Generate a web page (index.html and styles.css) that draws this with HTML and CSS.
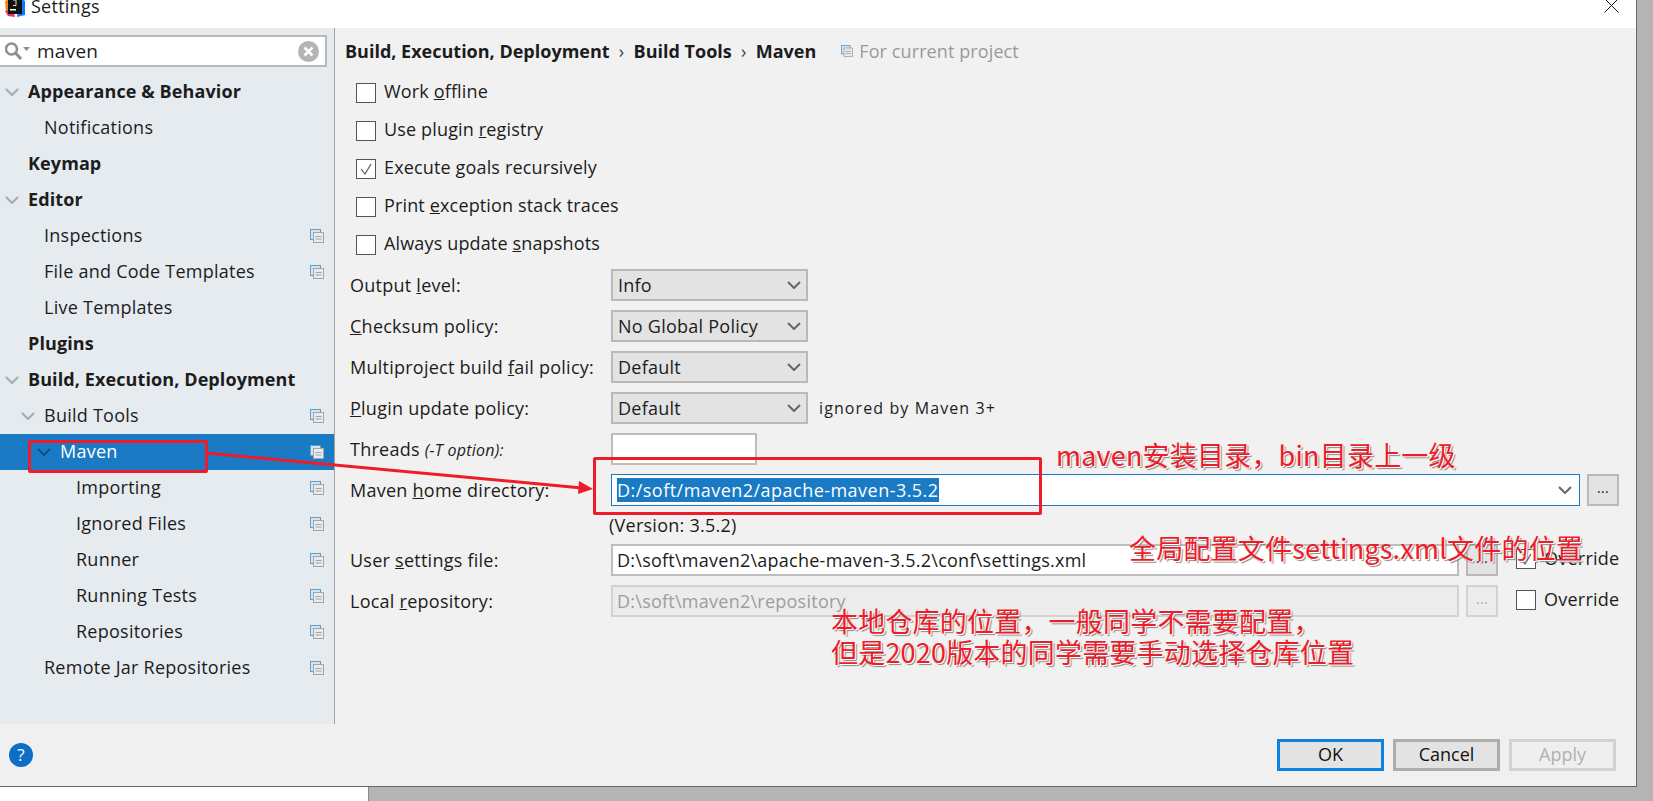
FILE: index.html
```html
<!DOCTYPE html>
<html lang="en">
<head>
    <meta charset="UTF-8">
    <title>Settings</title>
    <link rel="stylesheet" href="styles.css">
</head>
<body>
    <svg width="0" height="0" class="defs">
        <symbol id="layers" viewBox="0 0 14 14">
            <rect x="0.5" y="0.5" width="10" height="10" fill="#d6e4f0" stroke="#5f9fd0"/>
            <rect x="3.5" y="3.5" width="10" height="10" fill="#e6ebf0" stroke="#a5a5a5"/>
            <path d="M5.5 7.5h6M5.5 10h6" stroke="#a5a5a5"/>
        </symbol>
        <symbol id="chevron" viewBox="0 0 14 8">
            <path d="M1 1l6 6 6-6" fill="none" stroke="currentColor" stroke-width="2"/>
        </symbol>
    </svg>

    <div class="dialog">
        <div class="titlebar">
            <svg class="logo" width="20" height="20" viewBox="0 0 20 20">
                <path d="M0 4l6-3v12l-5 2z" fill="#f58220"/>
                <path d="M0 14l8-2 2 8-7-1z" fill="#ee2e6b"/>
                <path d="M14 0l6 4v14l-8 2z" fill="#087cfa"/>
                <rect x="3" y="0" width="14" height="17" fill="#111"/>
                <rect x="5" y="12" width="6" height="1.5" fill="#fff"/>
                <path d="M8 3h3v5.500H8" fill="none" stroke="#ddd" stroke-width="1"/>
            </svg>
            <span class="title">Settings</span>
            <svg class="close" width="15" height="15" viewBox="0 0 15 15">
                <path d="M0.5 0.5l14 14M14.5 0.5l-14 14" stroke="#111" stroke-width="1"/>
            </svg>
        </div>

        <div class="main">
            <div class="sidebar">
                <div class="search">
                    <svg class="search-icon" width="26" height="20" viewBox="0 0 26 20">
                        <circle cx="6.500" cy="8" r="5.500" fill="none" stroke="#8f8f8f" stroke-width="2.500"/>
                        <path d="M10.500 12l5.500 6" stroke="#8f8f8f" stroke-width="3"/>
                        <path d="M18 6h7l-3.500 4z" fill="#8f8f8f"/>
                    </svg>
                    <span class="search-text">maven</span>
                    <svg class="search-clear" width="21" height="21" viewBox="0 0 21 21">
                        <circle cx="10.500" cy="10.500" r="10.500" fill="#b4b4b4"/>
                        <path d="M6.500 6.500l8 8M14.500 6.500l-8 8" stroke="#fff" stroke-width="2.500"/>
                    </svg>
                </div>
                <ul class="tree">
                    <li class="row bold"><svg class="arrow"><use href="#chevron"/></svg><span>Appearance &amp; Behavior</span></li>
                    <li class="row lvl1"><span>Notifications</span></li>
                    <li class="row bold"><span>Keymap</span></li>
                    <li class="row bold"><svg class="arrow"><use href="#chevron"/></svg><span>Editor</span></li>
                    <li class="row lvl1"><span>Inspections</span><svg class="layers"><use href="#layers"/></svg></li>
                    <li class="row lvl1"><span>File and Code Templates</span><svg class="layers"><use href="#layers"/></svg></li>
                    <li class="row lvl1"><span>Live Templates</span></li>
                    <li class="row bold"><span>Plugins</span></li>
                    <li class="row bold"><svg class="arrow"><use href="#chevron"/></svg><span>Build, Execution, Deployment</span></li>
                    <li class="row lvl1"><svg class="arrow"><use href="#chevron"/></svg><span>Build Tools</span><svg class="layers"><use href="#layers"/></svg></li>
                    <li class="row lvl2 selected"><svg class="arrow"><use href="#chevron"/></svg><span>Maven</span><svg class="layers"><use href="#layers"/></svg></li>
                    <li class="row lvl3"><span>Importing</span><svg class="layers"><use href="#layers"/></svg></li>
                    <li class="row lvl3"><span>Ignored Files</span><svg class="layers"><use href="#layers"/></svg></li>
                    <li class="row lvl3"><span>Runner</span><svg class="layers"><use href="#layers"/></svg></li>
                    <li class="row lvl3"><span>Running Tests</span><svg class="layers"><use href="#layers"/></svg></li>
                    <li class="row lvl3"><span>Repositories</span><svg class="layers"><use href="#layers"/></svg></li>
                    <li class="row lvl1"><span>Remote Jar Repositories</span><svg class="layers"><use href="#layers"/></svg></li>
                </ul>
            </div>

            <div class="content">
                <div class="crumbs">
                    <b>Build, Execution, Deployment</b><span class="sep">›</span><b>Build Tools</b><span class="sep">›</span><b>Maven</b>
                    <svg class="crumb-icon"><use href="#layers"/></svg><span class="crumb-note">For current project</span>
                </div>

                <div class="check-row"><span class="box"></span><span class="check-text">Work <u>o</u>ffline</span></div>
                <div class="check-row"><span class="box"></span><span class="check-text">Use plugin <u>r</u>egistry</span></div>
                <div class="check-row">
                    <span class="box"><svg width="14" height="14" viewBox="0 0 14 14"><path d="M2 7l4 5 6-10" fill="none" stroke="#555" stroke-width="1.200"/></svg></span>
                    <span class="check-text">Execute <u>g</u>oals recursively</span>
                </div>
                <div class="check-row"><span class="box"></span><span class="check-text">Print <u>e</u>xception stack traces</span></div>
                <div class="check-row"><span class="box"></span><span class="check-text">Always update <u>s</u>napshots</span></div>

                <div class="form">
                    <div class="form-row">
                        <label class="form-label">Output <u>l</u>evel:</label>
                        <div class="select"><span>Info</span><svg class="caret"><use href="#chevron"/></svg></div>
                    </div>
                    <div class="form-row">
                        <label class="form-label"><u>C</u>hecksum policy:</label>
                        <div class="select"><span>No Global Policy</span><svg class="caret"><use href="#chevron"/></svg></div>
                    </div>
                    <div class="form-row">
                        <label class="form-label">Multiproject build <u>f</u>ail policy:</label>
                        <div class="select"><span>Default</span><svg class="caret"><use href="#chevron"/></svg></div>
                    </div>
                    <div class="form-row">
                        <label class="form-label"><u>P</u>lugin update policy:</label>
                        <div class="select"><span>Default</span><svg class="caret"><use href="#chevron"/></svg></div>
                        <span class="hint">ignored by Maven 3+</span>
                    </div>
                    <div class="form-row">
                        <label class="form-label">Threads <i class="small">(-T option):</i></label>
                        <div class="input threads"></div>
                    </div>
                    <div class="form-row">
                        <label class="form-label">Maven <u>h</u>ome directory:</label>
                        <div class="input home"><span class="picked">D:/soft/maven2/apache-maven-3.5.2</span><svg class="caret"><use href="#chevron"/></svg></div>
                        <div class="browse">...</div>
                    </div>
                    <div class="version">(Version: 3.5.2)</div>
                    <div class="form-row">
                        <label class="form-label">User <u>s</u>ettings file:</label>
                        <div class="input path">D:\soft\maven2\apache-maven-3.5.2\conf\settings.xml</div>
                        <div class="browse">...</div>
                        <span class="box override-box"><svg width="14" height="14" viewBox="0 0 14 14"><path d="M2 7l4 5 6-10" fill="none" stroke="#555" stroke-width="1.200"/></svg></span>
                        <span class="override-text">Override</span>
                    </div>
                    <div class="form-row">
                        <label class="form-label">Local <u>r</u>epository:</label>
                        <div class="input path off">D:\soft\maven2\repository</div>
                        <div class="browse off">...</div>
                        <span class="box override-box"></span>
                        <span class="override-text">Override</span>
                    </div>
                </div>
            </div>
        </div>

        <div class="footer">
            <svg class="help" width="24" height="24" viewBox="0 0 24 24">
                <circle cx="12" cy="12" r="12" fill="#0d6ec6"/>
                <text x="12" y="18" text-anchor="middle" font-family="Open Sans" font-size="17" fill="#fff">?</text>
            </svg>
            <button class="btn primary">OK</button>
            <button class="btn">Cancel</button>
            <button class="btn off">Apply</button>
        </div>
    </div>
    <div class="strip"></div>

    <!-- red notes drawn over the screenshot -->
    <div class="mark mark-tree"></div>
    <div class="mark mark-home"></div>
    <svg class="arrow-note" width="400" height="50" viewBox="0 0 400 50">
        <path d="M4 5L380 40" stroke="#ee1c2b" stroke-width="3"/>
        <path d="M391 41L377 33 376 46z" fill="#ee1c2b"/>
    </svg>
    <div class="note note-1">maven安装目录，bin目录上一级</div>
    <div class="note note-2">全局配置文件settings.xml文件的位置</div>
    <div class="note note-3">本地仓库的位置，一般同学不需要配置，<br>但是2020版本的同学需要手动选择仓库位置</div>
</body>
</html>
```

FILE: styles.css
```css
* {
    box-sizing: border-box;
}

body {
    margin: 0;
    width: 1653px;
    height: 801px;
    overflow: hidden;
    position: relative;
    background-color: #b4b4b4;
    font-family: 'Open Sans', 'Noto Sans', sans-serif;
    font-size: 18px;
    letter-spacing: 0.25px;
    color: #1c1c1c;
}

.defs {
    display: block;
    height: 0;
}

.dialog {
    width: 1637px;
    height: 787px;
    display: flex;
    flex-direction: column;
    background-color: #f1f1f1;
    border-right: 1px solid #666;
    border-bottom: 1px solid #666;
}

.strip {
    width: 369px;
    height: 14px;
    background-color: #fff;
    border-right: 1px solid #888;
}

.titlebar {
    height: 28px;
    flex: none;
    display: flex;
    align-items: flex-start;
    background-color: #fff;
    overflow: hidden;
}

.logo {
    flex: none;
    margin: -3px 0 0 5px;
}

.title {
    margin: -7px 0 0 6px;
    font-size: 18px;
    line-height: 26px;
}

.close {
    margin: -2px 17px 0 auto;
}

.main {
    flex: 1;
    display: flex;
    min-height: 0;
}

.sidebar {
    width: 335px;
    flex: none;
    background-color: #e6ebf0;
    border-right: 1px solid #a3a3a3;
}

.search {
    height: 32px;
    width: 327px;
    margin-top: 7px;
    display: flex;
    align-items: center;
    background-color: #fff;
    border: 2px solid #b9b9b9;
    border-left: none;
}

.search-icon {
    margin-left: 5px;
}

.search-text {
    margin-left: 6px;
    font-size: 19px;
    line-height: 24px;
    padding-bottom: 1px;
}

.search-clear {
    margin-left: auto;
    margin-right: 6px;
}

.tree {
    list-style: none;
    margin: 7px 0 0;
    padding: 0;
}

.row {
    height: 36px;
    display: flex;
    align-items: center;
    padding-left: 28px;
    position: relative;
    white-space: nowrap;
}

.row span {
    padding-bottom: 3px;
}

.bold {
    font-weight: 700;
    letter-spacing: 0.1px;
}

.lvl1 {
    padding-left: 44px;
}

.lvl2 {
    padding-left: 60px;
}

.lvl3 {
    padding-left: 76px;
}

.selected {
    background-color: #1a7ac4;
    color: #fff;
}

.arrow {
    width: 14px;
    height: 8px;
    margin-left: -23px;
    margin-right: 9px;
    color: #a6abb0;
    flex: none;
}

.selected .arrow {
    color: #0f4f86;
}

.layers {
    width: 14px;
    height: 14px;
    position: absolute;
    right: 10px;
    top: 11px;
}

.content {
    flex: 1;
    padding-left: 15px;
    min-width: 0;
}

.crumbs {
    height: 46px;
    display: flex;
    align-items: center;
    margin-left: -5px;
}

.crumbs b {
    letter-spacing: 0;
}

.sep {
    width: 24px;
    text-align: center;
    color: #444;
}

.crumb-icon {
    width: 12px;
    height: 12px;
    margin-left: 25px;
    margin-right: 6px;
}

.crumb-note {
    color: #9a9a9a;
    letter-spacing: 0.1px;
}

.check-row {
    height: 38px;
    display: flex;
    align-items: center;
    padding-left: 6px;
}

.check-text {
    padding-bottom: 4px;
    letter-spacing: 0.15px;
}

.box {
    width: 20px;
    height: 20px;
    flex: none;
    display: flex;
    align-items: center;
    justify-content: center;
    margin-right: 8px;
    background-color: #fff;
    border: 1.500px solid #555;
}

.form {
    margin-top: 5px;
    display: flex;
    flex-direction: column;
    gap: 9px;
}

.form-row {
    height: 32px;
    display: flex;
    align-items: center;
    white-space: nowrap;
}

.form-label {
    width: 261px;
    flex: none;
}

.small {
    font-size: 16px;
}

.select {
    width: 197px;
    height: 32px;
    display: flex;
    align-items: center;
    justify-content: space-between;
    padding: 0 5px;
    background-color: #e3e3e3;
    border: 2px solid #b9b9b9;
}

.caret {
    width: 14px;
    height: 8px;
    color: #666;
    flex: none;
}

.hint {
    margin-left: 11px;
    font-size: 16px;
    letter-spacing: 1.100px;
}

.input {
    height: 32px;
    display: flex;
    align-items: center;
    padding-left: 4px;
    background-color: #fff;
    border: 2px solid #bdbdbd;
}

.threads {
    width: 146px;
}

.home {
    width: 969px;
    padding-right: 7px;
    justify-content: space-between;
    border: 1px solid #1a7ac4;
    padding-left: 5px;
}

.picked {
    background-color: #1a7ac4;
    color: #fff;
    line-height: 24px;
    letter-spacing: 0.47px;
}

.path {
    width: 848px;
}

.path.off {
    background-color: #ececec;
    border-color: #d2d2d2;
    color: #9d9d9d;
}

.browse {
    width: 32px;
    height: 32px;
    flex: none;
    margin-left: 7px;
    display: flex;
    align-items: center;
    justify-content: center;
    padding-bottom: 6px;
    font-size: 14px;
    background-color: #e3e3e3;
    border: 2px solid #b9b9b9;
}

.browse.off {
    background-color: #ececec;
    border-color: #d2d2d2;
    color: #aaa;
}

.override-box {
    margin-left: 18px;
    margin-bottom: 3px;
}

.override-text {
    padding-bottom: 5px;
}

.version {
    height: 20px;
    line-height: 20px;
    margin-left: 259px;
}

.footer {
    height: 62px;
    flex: none;
    display: flex;
    align-items: center;
    padding-right: 20px;
    gap: 9px;
    background-color: #f0f0f0;
}

.help {
    margin-left: 9px;
    margin-right: auto;
}

.btn {
    width: 107px;
    height: 32px;
    padding: 0 0 3px;
    font: inherit;
    color: #111;
    background-color: #e3e3e3;
    border: 3px solid #adadad;
}

.btn.primary {
    border-color: #0a84e0;
}

.btn.off {
    background-color: #efefef;
    border-color: #d2d2d2;
    color: #b0b0b0;
}

/* notas rojas */
.mark {
    position: absolute;
    border: 3px solid #ee1c2b;
    border-radius: 2px;
}

.mark-tree {
    left: 28px;
    top: 440px;
    width: 180px;
    height: 33px;
}

.mark-home {
    left: 593px;
    top: 457px;
    width: 449px;
    height: 58px;
}

.arrow-note {
    position: absolute;
    left: 202px;
    top: 448px;
}

.note {
    position: absolute;
    font-family: 'Noto Sans CJK SC', 'Noto Sans', sans-serif;
    font-size: 27px;
    color: #ee1c2b;
    letter-spacing: 0.2px;
    white-space: nowrap;
    text-shadow: 1px 1px 0 #fff, 2px 2px 1px #8a8a8a;
}

.note-1 {
    left: 1056px;
    top: 435px;
    line-height: 40px;
}

.note-2 {
    left: 1129px;
    top: 528px;
    line-height: 40px;
}

.note-3 {
    left: 831px;
    top: 605px;
    line-height: 31px;
}
```
